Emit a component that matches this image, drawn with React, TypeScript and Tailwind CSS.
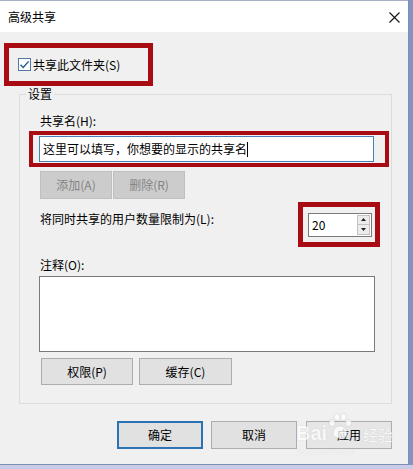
import React from "react";

function Btn({ w, h, children, cls = "" }: { w: string; h: string; children: React.ReactNode; cls?: string }) {
  return (
    <div className={`${w} ${h} flex items-center justify-center leading-[16px] ${cls}`}>{children}</div>
  );
}

export default function App() {
  return (
    <div className="w-[413px] h-[469px] bg-[#c8cce8] flex flex-col overflow-hidden font-['Noto_Sans_CJK_SC','Liberation_Sans',sans-serif] text-[12px] leading-[16px] text-black">
      <div className="flex">
        <div className="relative w-[409px] h-[465px] bg-[#f0f0f0] flex flex-col border-r border-b border-[#7f8db3]">
          {/* Title bar */}
          <div className="h-[32px] bg-white flex items-center justify-between pl-[8px] pr-[8px] border-t border-[#a9b0c4]">
            <span>高级共享</span>
            <svg width="11" height="11" viewBox="0 0 11 11" className="mt-[1px]">
              <path d="M0.5 0.5 L10.5 10.5 M10.5 0.5 L0.5 10.5" stroke="#111" strokeWidth="1.1" fill="none" />
            </svg>
          </div>

          {/* Red box 1 */}
          <div className="mt-[11px] ml-[4px] w-[149px] h-[43px] border-[5px] border-[#a80b12] flex items-center pl-[9px] gap-[2px]">
            <svg width="13" height="13" viewBox="0 0 13 13">
              <rect x="0.5" y="0.5" width="12" height="12" fill="#fff" stroke="#5078a8" />
              <path d="M2.5 6.8 L5.2 9.4 L10.6 3.4" stroke="#24588f" strokeWidth="1.4" fill="none" />
            </svg>
            <span>共享此文件夹(S)</span>
          </div>

          {/* Group box */}
          <fieldset className="ml-[19px] w-[373px] border border-[#dcdcdc] pb-[18px]">
            <legend className="ml-[6px] px-[2px] leading-[16px]">设置</legend>
            <div className="flex flex-col">
              <div className="mt-[11px] ml-[20px]">共享名(H):</div>
              <div className="mt-[2px] ml-[9px] w-[360px] h-[36px] border-[4px] border-[#a80b12] pl-[6px] pr-[11px] py-[1px]">
                <div className="h-[26px] w-full border border-[#4a7fb5] bg-white flex items-center pl-[3px]">
                  <span>这里可以填写，你想要的显示的共享名</span>
                  <span className="w-[1px] h-[15px] bg-black"></span>
                </div>
              </div>
              <div className="mt-[4px] ml-[20px] flex gap-[1px]">
                <Btn w="w-[72px]" h="h-[28px]" cls="bg-[#cccccc] border border-[#bfbfbf] text-[#838383]">添加(A)</Btn>
                <Btn w="w-[72px]" h="h-[28px]" cls="bg-[#cccccc] border border-[#bfbfbf] text-[#838383]">删除(R)</Btn>
              </div>
              <div className="mt-[3px] flex items-start">
                <div className="ml-[20px] mt-[9px]">将同时共享的用户数量限制为(L):</div>
                <div className="ml-auto mr-[11px] w-[82px] h-[45px] border-[5px] border-[#a80b12] flex items-center pl-[5px]">
                  <div className="w-[64px] h-[24px] border border-[#7a7a7a] bg-white flex items-center">
                    <span className="flex-1 pl-[3px]">20</span>
                    <div className="mr-[1px] w-[13px] h-[20px] flex flex-col border border-[#c2c2c2] bg-[#ececec]">
                      <div className="flex-1 flex items-center justify-center border-b border-[#c2c2c2]">
                        <svg width="5" height="3" viewBox="0 0 5 3"><path d="M2.5 0 L5 3 L0 3 Z" fill="#222" /></svg>
                      </div>
                      <div className="flex-1 flex items-center justify-center">
                        <svg width="5" height="3" viewBox="0 0 5 3"><path d="M0 0 L5 0 L2.5 3 Z" fill="#222" /></svg>
                      </div>
                    </div>
                  </div>
                </div>
              </div>
              <div className="mt-[10px] ml-[20px]">注释(O):</div>
              <div className="mt-[3px] ml-[19px] w-[336px] h-[76px] border border-[#7a7a7a] bg-white"></div>
              <div className="mt-[6px] ml-[21px] flex gap-[6px]">
                <Btn w="w-[92px]" h="h-[27px]" cls="bg-[#e1e1e1] border border-[#adadad]">权限(P)</Btn>
                <Btn w="w-[93px]" h="h-[27px]" cls="bg-[#e1e1e1] border border-[#adadad]">缓存(C)</Btn>
              </div>
            </div>
          </fieldset>

          {/* Bottom buttons */}
          <div className="mt-[17px] flex justify-end pr-[16px]">
            <Btn w="w-[86px]" h="h-[28px]" cls="bg-[#e1e1e1] border-2 border-[#2b73b3] mr-[8px]">确定</Btn>
            <Btn w="w-[86px]" h="h-[28px]" cls="bg-[#e1e1e1] border border-[#adadad] mr-[9px]">取消</Btn>
            <Btn w="w-[86px]" h="h-[28px]" cls="bg-[#e6e6e6] border border-[#adadad]">应用</Btn>
          </div>

          {/* Baidu watermark overlay */}
          <div className="absolute left-[294px] top-[411px] w-[110px] h-[50px] pointer-events-none opacity-75">
            <div className="absolute left-[2px] top-[12px] text-[20px] leading-[20px] font-bold text-white font-['Liberation_Sans',sans-serif] [text-shadow:0_0_1px_#b8b8b8]">Bai</div>
            <svg className="absolute left-[33px] top-[2px]" width="26" height="28" viewBox="0 0 26 28">
              <g fill="#ffffff" stroke="#c8c8c8" strokeWidth="0.6">
                <ellipse cx="5" cy="10" rx="3" ry="3.6" />
                <ellipse cx="10" cy="4" rx="3" ry="3.6" />
                <ellipse cx="16.5" cy="4" rx="3" ry="3.6" />
                <ellipse cx="21.5" cy="10" rx="3" ry="3.6" />
                <path d="M6 22 C6 15 10 13 13 13 C16 13 20 15 20 22 C20 26 6 26 6 22 Z" />
              </g>
            </svg>
            <div className="absolute left-[69px] top-[15px] text-[15px] leading-[17px] text-white [text-shadow:0_0_1px_#b8b8b8]">经验</div>
            <div className="absolute left-[4px] top-[37px] text-[7px] leading-[8px] text-white [text-shadow:0_0_1px_#c0c0c0] font-['Liberation_Sans',sans-serif]">jingyan.baidu.com</div>
          </div>
        </div>
        <div className="w-[4px] h-[465px] bg-[#8494c0]"></div>
      </div>
    </div>
  );
}
